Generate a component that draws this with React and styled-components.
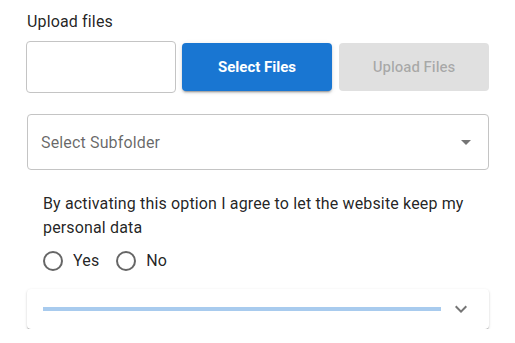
import React from "react";
import styled, { createGlobalStyle } from "styled-components";

const GlobalStyle = createGlobalStyle`
  body {
    margin: 0;
    background: #ffffff;
    font-family: Roboto, "Liberation Sans", Arial, sans-serif;
    color: rgba(0, 0, 0, 0.87);
  }
`;

function RadioOption(props) {
  return (
    <RadioLabel>
      <svg width="24" height="24" viewBox="0 0 24 24">
        <circle cx="12" cy="12" r="9" fill="none" stroke="rgba(0,0,0,0.6)" strokeWidth="2" />
      </svg>
      <span>{props.label}</span>
    </RadioLabel>
  );
}

export default function App() {
  return (
    <>
      <GlobalStyle />
      <Wrap>
        <Label>Upload files</Label>
        <UploadRow>
          <FileBox />
          <Button primary>Select Files</Button>
          <Button disabled>Upload Files</Button>
        </UploadRow>
        <SelectBox>
          <Placeholder>Select Subfolder</Placeholder>
          <svg width="24" height="24" viewBox="0 0 24 24">
            <path d="M7 10l5 5 5-5z" fill="rgba(0,0,0,0.54)" />
          </svg>
        </SelectBox>
        <Consent>
          <p>By activating this option I agree to let the website keep my personal data</p>
          <RadioRow>
            <RadioOption label="Yes" />
            <RadioOption label="No" />
          </RadioRow>
        </Consent>
        <Accordion>
          <Progress />
          <svg width="24" height="24" viewBox="0 0 24 24">
            <path d="M16.59 8.59 12 13.17 7.41 8.59 6 10l6 6 6-6z" fill="rgba(0,0,0,0.54)" />
          </svg>
        </Accordion>
      </Wrap>
    </>
  );
}

const Wrap = styled.div`
  width: 462px;
  padding: 10px 0 0 27px;
`;

const Label = styled.div`
  font-size: 16px;
  line-height: 24px;
  letter-spacing: 0.15px;
  margin-bottom: 7px;
`;

const UploadRow = styled.div`
  display: flex;
  align-items: center;
  margin-left: -1px;
  gap: 6px;
`;

const FileBox = styled.div`
  width: 148px;
  height: 50px;
  border: 1px solid #c4c4c4;
  border-radius: 4px;
`;

const Button = styled.div`
  width: 150px;
  height: 48px;
  border-radius: 4px;
  display: flex;
  align-items: center;
  justify-content: center;
  font-size: 15px;
  font-weight: ${(p) => (p.primary ? 700 : 500)};
  background: ${(p) => (p.primary ? "#1976d2" : "#e0e0e0")};
  color: ${(p) => (p.primary ? "#ffffff" : "rgba(0,0,0,0.26)")};
  box-shadow: ${(p) =>
    p.primary
      ? "0 3px 1px -2px rgba(0,0,0,0.2), 0 2px 2px 0 rgba(0,0,0,0.14), 0 1px 5px 0 rgba(0,0,0,0.12)"
      : "none"};
  & + & {
    margin-left: 1px;
  }
`;

const SelectBox = styled.div`
  margin-top: 21px;
  height: 54px;
  border: 1px solid #c4c4c4;
  border-radius: 4px;
  display: flex;
  align-items: center;
  justify-content: space-between;
  padding: 0 10px 0 13px;
`;

const Placeholder = styled.span`
  font-size: 16px;
  letter-spacing: 0.15px;
  color: rgba(0, 0, 0, 0.6);
`;

const Consent = styled.div`
  padding-left: 16px;
  margin-top: 22px;
  p {
    margin: 0;
    font-size: 16px;
    line-height: 24px;
    letter-spacing: 0.15px;
  }
`;

const RadioRow = styled.div`
  display: flex;
  gap: 15px;
  margin-top: 9px;
  margin-left: -2px;
`;

const RadioLabel = styled.label`
  display: flex;
  align-items: center;
  gap: 8px;
  font-size: 16px;
  line-height: 24px;
  letter-spacing: 0.15px;
`;

const Accordion = styled.div`
  margin-top: 16px;
  height: 40px;
  border-radius: 4px;
  background: #ffffff;
  box-shadow: 0 2px 1px -1px rgba(0,0,0,0.25), 0 1px 1px 0 rgba(0,0,0,0.16), 0 1px 3px 0 rgba(0,0,0,0.14);
  display: flex;
  align-items: center;
  gap: 8px;
  padding: 0 16px;
`;

const Progress = styled.div`
  flex: 1;
  height: 4px;
  background: #a8cbee;
`;
